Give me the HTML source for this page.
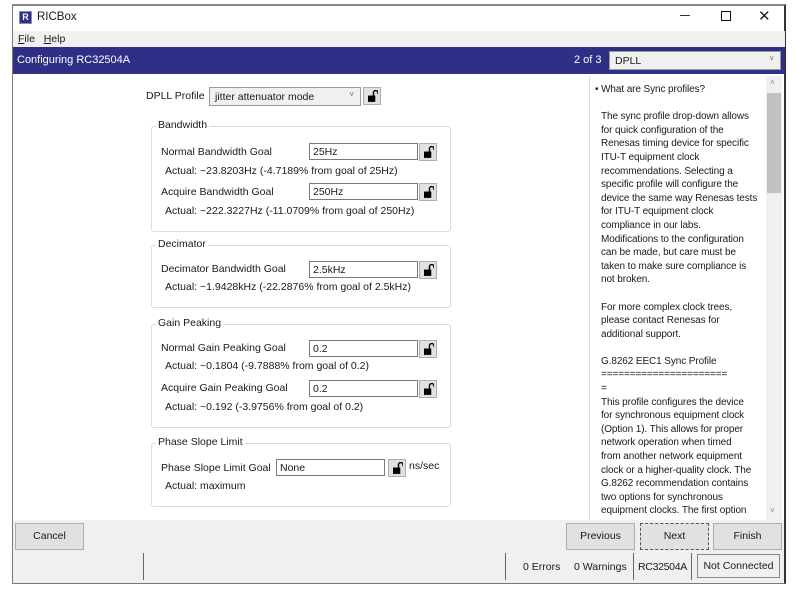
<!DOCTYPE html>
<html><head><meta charset="utf-8"><style>
*{box-sizing:border-box;margin:0;padding:0}
body{width:796px;height:605px;background:#fff;position:relative;overflow:hidden;font-family:"Liberation Sans",sans-serif;font-size:10.5px;color:#1a1a1a}
.a{position:absolute;white-space:nowrap}
.win{position:absolute;left:12px;top:4px;width:774px;height:580px;border:1px solid #7a7a7a;border-top:2px solid #888;border-right:2px solid #333;background:#fff}
.inp{position:absolute;height:17px;border:1px solid #7a7a7a;background:#fff;padding:2px 3px;font-size:10.5px}
.lk{position:absolute;width:18px;height:18px;border:1px solid #adadad;background:#e1e1e1}
.lk svg{position:absolute;left:4px;top:2px}
.grp{position:absolute;border:1px solid #dcdcdc;border-radius:3px}
.grp .t{position:absolute;top:-8px;left:4px;background:#fff;padding:0 2px}
.btn{position:absolute;height:27px;border:1px solid #adadad;background:#e1e1e1;text-align:center;line-height:25px}
</style></head><body>
<div class="win"></div>
<div class="a" style="left:19px;top:11px;width:13px;height:13px;background:#30308a;border:1px solid #8888cc;color:#fff;font-size:9px;font-weight:bold;text-align:center;line-height:11px">R</div>
<div class="a" style="left:37px;top:11px;font-size:11.5px">RICBox</div>
<div class="a" style="left:680px;top:15px;width:10px;height:1px;background:#333"></div>
<div class="a" style="left:721px;top:11px;width:10px;height:10px;border:1px solid #111"></div>
<div class="a" style="left:758px;top:7px;font-size:15px;color:#222">✕</div>
<div class="a" style="left:13px;top:31px;width:772px;height:16px;background:#f0f0f0"></div>
<div class="a" style="left:18px;top:33px"><u>F</u>ile&nbsp;&nbsp; <u>H</u>elp</div>
<div class="a" style="left:13px;top:47px;width:772px;height:27px;background:#2f2f87"></div>
<div class="a" style="left:17px;top:54px;color:#fff;font-size:11px">Configuring RC32504A</div>
<div class="a" style="left:574px;top:54px;color:#fff;font-size:11px">2 of 3</div>
<div class="a" style="left:609px;top:51px;width:172px;height:19px;background:#f0f0f0;border:1px solid #999;padding:3px 5px">DPLL<span style="position:absolute;right:6px;top:2px;font-size:8px;color:#666">˅</span></div>
<div class="a" style="left:589px;top:76px;width:194px;height:444px;border-left:1px solid #ddd;background:#fff"></div>
<div class="a" style="left:766px;top:76px;width:16px;height:444px;background:#f0f0f0"></div>
<div class="a" style="left:767px;top:93px;width:14px;height:100px;background:#c2c2c2"></div>
<div class="a" style="left:770px;top:78px;font-size:8px;color:#888">˄</div>
<div class="a" style="left:770px;top:506px;font-size:8px;color:#888">˅</div>
<div class="a" style="left:595px;top:83px;width:170px;height:436px;overflow:hidden;line-height:13.6px;white-space:nowrap;font-size:10px;letter-spacing:-0.1px">
• What are Sync profiles?<br><br>
<div style="padding-left:6px">The sync profile drop-down allows<br>for quick configuration of the<br>Renesas timing device for specific<br>ITU-T equipment clock<br>recommendations. Selecting a<br>specific profile will configure the<br>device the same way Renesas tests<br>for ITU-T equipment clock<br>compliance in our labs.<br>Modifications to the configuration<br>can be made, but care must be<br>taken to make sure compliance is<br>not broken.<br><br>For more complex clock trees,<br>please contact Renesas for<br>additional support.<br><br>G.8262 EEC1 Sync Profile<br>======================<br>=<br>This profile configures the device<br>for synchronous equipment clock<br>(Option 1). This allows for proper<br>network operation when timed<br>from another network equipment<br>clock or a higher-quality clock. The<br>G.8262 recommendation contains<br>two options for synchronous<br>equipment clocks. The first option</div>
</div>
<div class="a" style="left:146px;top:90px">DPLL Profile</div>
<div class="a" style="left:209px;top:87px;width:152px;height:19px;background:#f0f0f0;border:1px solid #999;padding:3px 5px">jitter attenuator mode<span style="position:absolute;right:6px;top:2px;font-size:8px;color:#666">˅</span></div>
<div class="lk" style="left:363px;top:87px"><svg width="10" height="12" viewBox="0 0 11 13"><path d="M6 6V3a2.5 2.5 0 0 1 5 0v1.5" fill="none" stroke="#000" stroke-width="1.6"/><rect x="0" y="6" width="8" height="7" fill="#000"/></svg></div>
<div class="grp" style="left:151px;top:126px;width:300px;height:106px"><span class="t">Bandwidth</span></div>
<div class="a" style="left:161px;top:146px">Normal Bandwidth Goal</div>
<div class="inp" style="left:309px;top:143px;width:109px">25Hz</div>
<div class="lk" style="left:419px;top:143px"><svg width="10" height="12" viewBox="0 0 11 13"><path d="M6 6V3a2.5 2.5 0 0 1 5 0v1.5" fill="none" stroke="#000" stroke-width="1.6"/><rect x="0" y="6" width="8" height="7" fill="#000"/></svg></div>
<div class="a" style="left:165px;top:165px">Actual: ~23.8203Hz (-4.7189% from goal of 25Hz)</div>
<div class="a" style="left:161px;top:186px">Acquire Bandwidth Goal</div>
<div class="inp" style="left:309px;top:183px;width:109px">250Hz</div>
<div class="lk" style="left:419px;top:183px"><svg width="10" height="12" viewBox="0 0 11 13"><path d="M6 6V3a2.5 2.5 0 0 1 5 0v1.5" fill="none" stroke="#000" stroke-width="1.6"/><rect x="0" y="6" width="8" height="7" fill="#000"/></svg></div>
<div class="a" style="left:165px;top:205px">Actual: ~222.3227Hz (-11.0709% from goal of 250Hz)</div>
<div class="grp" style="left:151px;top:245px;width:300px;height:63px"><span class="t">Decimator</span></div>
<div class="a" style="left:161px;top:263px">Decimator Bandwidth Goal</div>
<div class="inp" style="left:309px;top:261px;width:109px">2.5kHz</div>
<div class="lk" style="left:419px;top:261px"><svg width="10" height="12" viewBox="0 0 11 13"><path d="M6 6V3a2.5 2.5 0 0 1 5 0v1.5" fill="none" stroke="#000" stroke-width="1.6"/><rect x="0" y="6" width="8" height="7" fill="#000"/></svg></div>
<div class="a" style="left:165px;top:281px">Actual: ~1.9428kHz (-22.2876% from goal of 2.5kHz)</div>
<div class="grp" style="left:151px;top:324px;width:300px;height:104px"><span class="t">Gain Peaking</span></div>
<div class="a" style="left:161px;top:342px">Normal Gain Peaking Goal</div>
<div class="inp" style="left:309px;top:340px;width:109px">0.2</div>
<div class="lk" style="left:419px;top:340px"><svg width="10" height="12" viewBox="0 0 11 13"><path d="M6 6V3a2.5 2.5 0 0 1 5 0v1.5" fill="none" stroke="#000" stroke-width="1.6"/><rect x="0" y="6" width="8" height="7" fill="#000"/></svg></div>
<div class="a" style="left:165px;top:360px">Actual: ~0.1804 (-9.7888% from goal of 0.2)</div>
<div class="a" style="left:161px;top:382px">Acquire Gain Peaking Goal</div>
<div class="inp" style="left:309px;top:380px;width:109px">0.2</div>
<div class="lk" style="left:419px;top:380px"><svg width="10" height="12" viewBox="0 0 11 13"><path d="M6 6V3a2.5 2.5 0 0 1 5 0v1.5" fill="none" stroke="#000" stroke-width="1.6"/><rect x="0" y="6" width="8" height="7" fill="#000"/></svg></div>
<div class="a" style="left:165px;top:401px">Actual: ~0.192 (-3.9756% from goal of 0.2)</div>
<div class="grp" style="left:151px;top:443px;width:300px;height:64px"><span class="t">Phase Slope Limit</span></div>
<div class="a" style="left:161px;top:462px">Phase Slope Limit Goal</div>
<div class="inp" style="left:276px;top:459px;width:109px">None</div>
<div class="lk" style="left:388px;top:459px"><svg width="10" height="12" viewBox="0 0 11 13"><path d="M6 6V3a2.5 2.5 0 0 1 5 0v1.5" fill="none" stroke="#000" stroke-width="1.6"/><rect x="0" y="6" width="8" height="7" fill="#000"/></svg></div>
<div class="a" style="left:409px;top:460px">ns/sec</div>
<div class="a" style="left:165px;top:480px">Actual: maximum</div>
<div class="a" style="left:13px;top:520px;width:771px;height:31px;background:#f0f0f0"></div>
<div class="btn" style="left:15px;top:523px;width:69px">Cancel</div>
<div class="btn" style="left:566px;top:523px;width:69px">Previous</div>
<div class="btn" style="left:640px;top:523px;width:69px;border:1px dashed #555">Next</div>
<div class="btn" style="left:713px;top:523px;width:69px">Finish</div>
<div class="a" style="left:13px;top:551px;width:771px;height:32px;background:#f0f0f0"></div>
<div class="a" style="left:143px;top:553px;width:1px;height:27px;background:#666"></div>
<div class="a" style="left:505px;top:553px;width:1px;height:27px;background:#666"></div>
<div class="a" style="left:523px;top:561px">0 Errors</div>
<div class="a" style="left:574px;top:561px">0 Warnings</div>
<div class="a" style="left:633px;top:553px;width:1px;height:27px;background:#666"></div>
<div class="a" style="left:638px;top:561px;letter-spacing:-0.3px">RC32504A</div>
<div class="a" style="left:691px;top:553px;width:1px;height:27px;background:#666"></div>
<div class="a" style="left:697px;top:554px;width:83px;height:24px;border:1px solid #888;text-align:center;line-height:22px">Not Connected</div>
</body></html>
